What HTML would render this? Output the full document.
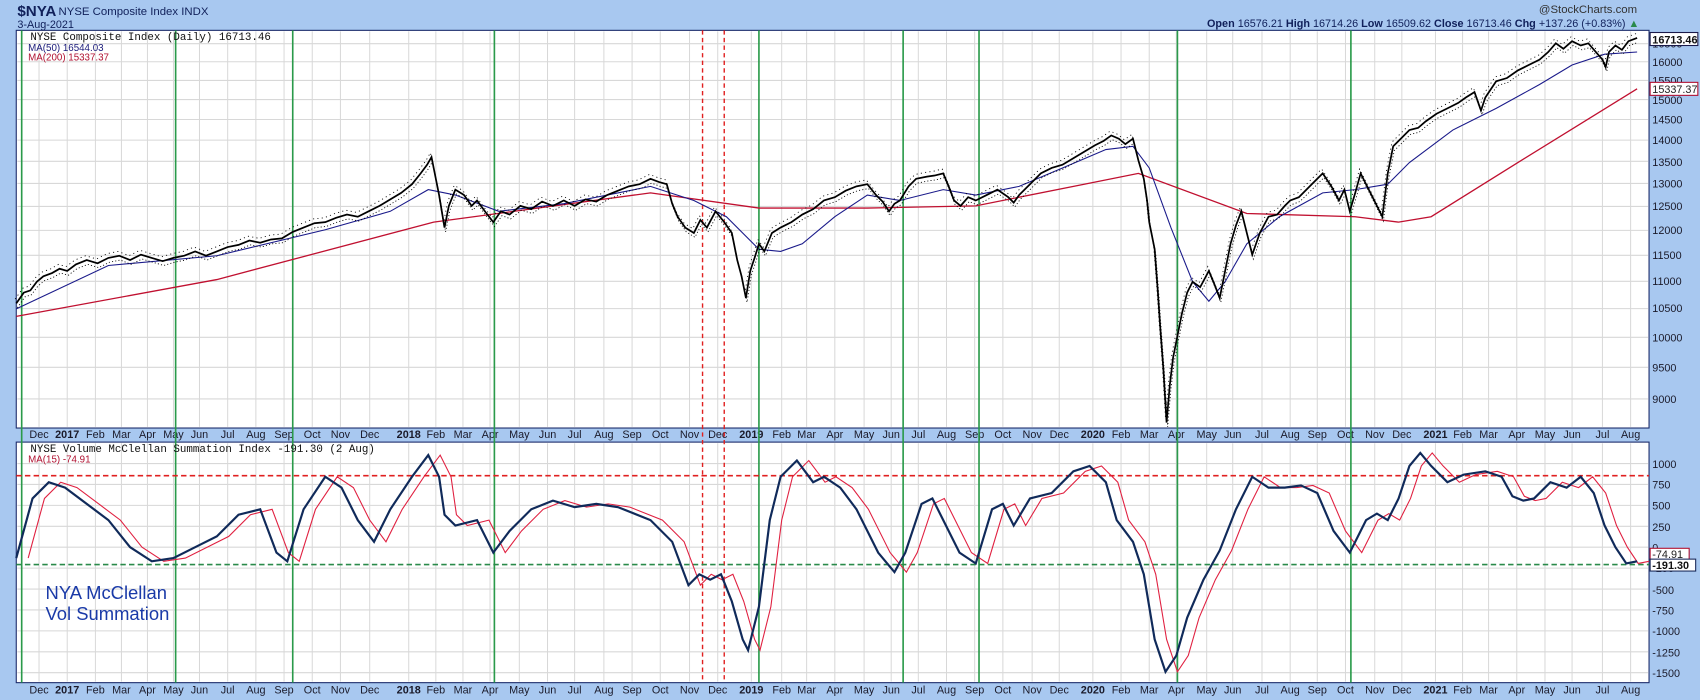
<!DOCTYPE html>
<html><head><meta charset="utf-8"><style>
html,body{margin:0;padding:0;background:#a8c8f0;}
svg{display:block;font-family:"Liberation Sans",sans-serif;}
</style></head><body>
<svg width="1700" height="700" viewBox="0 0 1568 646" preserveAspectRatio="none" xmlns="http://www.w3.org/2000/svg" xmlns:xlink="http://www.w3.org/1999/xlink">
<defs>
<path id="vg" d="M36 0V1M62 0V1M88 0V1M112 0V1M136 0V1M160 0V1M184 0V1M210 0V1M236 0V1M262 0V1M288 0V1M314 0V1M341 0V1M377 0V1M402 0V1M427 0V1M452 0V1M479 0V1M505 0V1M530 0V1M557 0V1M583 0V1M609 0V1M636 0V1M662 0V1M693 0V1M721 0V1M744 0V1M770 0V1M797 0V1M822 0V1M847 0V1M873 0V1M899 0V1M925 0V1M952 0V1M977 0V1M1008 0V1M1034 0V1M1060 0V1M1085 0V1M1113 0V1M1137 0V1M1164 0V1M1190 0V1M1215 0V1M1241 0V1M1268 0V1M1293 0V1M1324 0V1M1349 0V1M1373 0V1M1399 0V1M1425 0V1M1450 0V1M1478 0V1M1504 0V1" stroke="#d8d8d8" stroke-width="1" vector-effect="non-scaling-stroke"/>
<g id="ml" font-size="10" fill="#1a1a2a" text-anchor="middle">
<text x="36">Dec</text><text x="62" font-weight="bold">2017</text><text x="88">Feb</text><text x="112">Mar</text><text x="136">Apr</text><text x="160">May</text><text x="184">Jun</text><text x="210">Jul</text><text x="236">Aug</text><text x="262">Sep</text><text x="288">Oct</text><text x="314">Nov</text><text x="341">Dec</text><text x="377" font-weight="bold">2018</text><text x="402">Feb</text><text x="427">Mar</text><text x="452">Apr</text><text x="479">May</text><text x="505">Jun</text><text x="530">Jul</text><text x="557">Aug</text><text x="583">Sep</text><text x="609">Oct</text><text x="636">Nov</text><text x="662">Dec</text><text x="693" font-weight="bold">2019</text><text x="721">Feb</text><text x="744">Mar</text><text x="770">Apr</text><text x="797">May</text><text x="822">Jun</text><text x="847">Jul</text><text x="873">Aug</text><text x="899">Sep</text><text x="925">Oct</text><text x="952">Nov</text><text x="977">Dec</text><text x="1008" font-weight="bold">2020</text><text x="1034">Feb</text><text x="1060">Mar</text><text x="1085">Apr</text><text x="1113">May</text><text x="1137">Jun</text><text x="1164">Jul</text><text x="1190">Aug</text><text x="1215">Sep</text><text x="1241">Oct</text><text x="1268">Nov</text><text x="1293">Dec</text><text x="1324" font-weight="bold">2021</text><text x="1349">Feb</text><text x="1373">Mar</text><text x="1399">Apr</text><text x="1425">May</text><text x="1450">Jun</text><text x="1478">Jul</text><text x="1504">Aug</text>
</g>
<polyline id="osc" fill="none" points="15,515 30,460 45,445 60,450 80,465 100,480 120,505 140,518 160,515 180,505 200,495 220,475 240,470 255,510 265,518 280,470 300,440 315,450 330,480 345,500 360,470 380,440 395,420 405,440 410,475 420,485 440,480 455,510 470,490 490,470 510,462 530,468 550,465 570,468 600,480 620,500 635,540 645,530 655,535 665,530 675,555 685,590 690,600 700,560 710,480 720,440 735,425 750,445 760,440 775,450 790,470 810,510 825,528 835,510 850,465 860,460 870,480 885,510 900,520 915,470 925,465 935,485 950,460 970,455 990,435 1005,430 1020,445 1030,480 1045,500 1055,530 1065,590 1075,620 1085,605 1095,570 1110,535 1125,508 1140,470 1155,440 1170,450 1185,450 1200,448 1215,455 1230,490 1245,510 1260,480 1270,474 1280,480 1290,460 1300,430 1310,418 1320,430 1335,445 1350,438 1370,435 1385,440 1395,458 1405,462 1415,460 1430,445 1445,450 1458,440 1470,455 1480,485 1490,505 1500,520 1510,518"/>
<polyline id="px" fill="none" points="15,280 22,270 28,268 34,260 40,255 48,252 55,248 62,250 70,244 80,240 90,243 100,238 110,236 120,240 130,235 140,238 150,241 160,238 170,236 180,232 190,236 200,232 210,228 220,226 230,222 240,224 250,221 260,220 270,214 280,210 290,206 300,205 310,201 320,198 330,200 340,195 350,190 360,184 370,178 380,170 388,160 394,152 398,145 401,160 405,180 408,198 410,210 414,190 420,175 428,180 435,190 440,185 448,196 455,205 462,195 470,198 480,190 490,193 500,186 510,190 520,185 530,190 540,184 550,186 560,180 570,176 580,172 590,170 600,165 608,168 615,170 620,188 625,200 632,210 640,215 646,203 652,210 660,195 668,205 675,215 680,240 684,255 688,275 692,250 696,238 700,225 705,232 712,215 720,210 730,205 740,198 750,193 760,185 770,182 780,176 790,172 800,170 808,180 814,186 820,195 825,188 830,185 838,172 845,165 855,163 862,162 870,160 875,172 880,185 886,190 893,182 900,185 910,180 920,175 930,182 935,187 940,180 950,170 960,160 970,155 980,152 990,146 1000,140 1010,134 1018,130 1025,125 1032,128 1038,133 1045,128 1050,148 1055,165 1058,185 1060,205 1062,215 1065,230 1068,270 1070,300 1073,340 1076,390 1079,355 1082,330 1086,310 1090,290 1095,270 1100,260 1107,265 1115,250 1120,262 1125,275 1130,250 1135,225 1140,208 1145,195 1150,215 1155,235 1162,215 1170,200 1178,198 1185,190 1190,185 1198,182 1205,175 1212,168 1220,160 1228,172 1235,185 1240,175 1245,195 1250,178 1255,160 1260,170 1265,180 1270,190 1275,200 1280,160 1285,135 1292,128 1300,120 1308,118 1315,112 1325,105 1335,100 1345,95 1352,90 1360,85 1366,102 1370,90 1380,75 1390,72 1400,65 1410,60 1420,55 1428,48 1435,40 1442,45 1450,38 1458,42 1465,40 1472,48 1478,55 1481,62 1484,48 1490,42 1496,46 1502,38 1510,35"/>
</defs>
<rect x="0" y="0" width="1568" height="646" fill="#a8c8f0"/>
<rect x="15" y="28" width="1506" height="367" fill="#fff" stroke="#1a2a6a" stroke-width="1"/>
<rect x="15" y="408" width="1506" height="222" fill="#fff" stroke="#1a2a6a" stroke-width="1"/>
<use xlink:href="#vg" href="#vg" transform="translate(0,29) scale(1,365)"/>
<use xlink:href="#vg" href="#vg" transform="translate(0,409) scale(1,220)"/>
<g stroke="#d8d8d8" stroke-width="1">
<path d="M16 40.3H1520M16 57H1520M16 74.2H1520M16 91.9H1520M16 110.3H1520M16 129.3H1520M16 148.9H1520M16 169.3H1520M16 190.5H1520M16 212.6H1520M16 235.6H1520M16 259.6H1520M16 284.8H1520M16 311.3H1520M16 339H1520M16 368.2H1520"/>
<path d="M16 427.8H1520M16 447.1H1520M16 466.4H1520M16 485.7H1520M16 505H1520M16 524.3H1520M16 543.6H1520M16 562.9H1520M16 582.2H1520M16 601.5H1520M16 620.8H1520"/>
</g>
<use xlink:href="#ml" href="#ml" transform="translate(0,404)"/>
<use xlink:href="#ml" href="#ml" transform="translate(0,640)"/>
<g font-size="10" fill="#1a1a2a">
<text x="1524" y="44">16500</text><text x="1524" y="61">16000</text><text x="1524" y="78">15500</text><text x="1524" y="96">15000</text><text x="1524" y="114">14500</text><text x="1524" y="133">14000</text><text x="1524" y="153">13500</text><text x="1524" y="173">13000</text><text x="1524" y="194">12500</text><text x="1524" y="216">12000</text><text x="1524" y="239">11500</text><text x="1524" y="263">11000</text><text x="1524" y="288">10500</text><text x="1524" y="315">10000</text><text x="1524" y="343">9500</text><text x="1524" y="372">9000</text>
<text x="1524" y="432">1000</text><text x="1524" y="451">750</text><text x="1524" y="470">500</text><text x="1524" y="490">250</text><text x="1524" y="509">0</text><text x="1524" y="528">-250</text><text x="1524" y="548">-500</text><text x="1524" y="567">-750</text><text x="1524" y="586">-1000</text><text x="1524" y="606">-1250</text><text x="1524" y="625">-1500</text>
</g>
<g stroke="#2a9a4a" stroke-width="1.5">
<path d="M20 28V630M162 28V630M270 28V630M456 28V630M700 28V630M833 28V630M903 28V630M1086 28V630M1246 28V630"/>
</g>
<path d="M648 28V630M668 28V630" stroke="#e02020" stroke-width="1.3" stroke-dasharray="4,3"/>
<path d="M15 439H1521" stroke="#e02020" stroke-width="1.5" stroke-dasharray="5,3"/>
<path d="M15 521H1521" stroke="#2a8a4a" stroke-width="1.5" stroke-dasharray="5,3"/>
<polyline fill="none" stroke="#c01030" stroke-width="1.2" points="15,292 200,258 400,205 600,178 700,192 800,192 900,190 1000,170 1050,160 1150,197 1250,200 1290,205 1320,200 1400,150 1510,82"/>
<polyline fill="none" stroke="#1a1a8a" stroke-width="1" points="15,285 100,245 200,236 300,212 360,195 395,175 420,180 460,195 520,188 600,172 640,185 670,200 700,230 720,232 740,225 770,200 800,180 830,185 870,175 900,180 940,172 980,155 1020,138 1045,135 1060,155 1080,210 1100,260 1115,278 1130,260 1150,225 1180,200 1220,178 1250,175 1280,170 1300,150 1340,120 1380,100 1420,78 1450,60 1480,50 1510,48"/>
<use xlink:href="#px" href="#px" stroke="#000" stroke-width="1.6"/>
<use xlink:href="#px" href="#px" stroke="#000" stroke-width="0.8" transform="translate(1,4)" stroke-dasharray="1,2"/>
<use xlink:href="#px" href="#px" stroke="#000" stroke-width="0.8" transform="translate(-1,-4)" stroke-dasharray="1,3"/>
<use xlink:href="#osc" href="#osc" stroke="#e02040" stroke-width="1" transform="translate(11,0)"/>
<use xlink:href="#osc" href="#osc" stroke="#102a5a" stroke-width="2"/>
<text x="16" y="15" font-size="14" font-weight="bold" fill="#10205a">$NYA</text>
<text x="54" y="14" font-size="10.5" fill="#10205a">NYSE Composite Index  INDX</text>
<text x="16" y="26" font-size="10" fill="#10205a">3-Aug-2021</text>
<text x="1510" y="12" font-size="10.5" fill="#333" text-anchor="end">@StockCharts.com</text>
<text x="1512" y="25" font-size="10" fill="#10205a" text-anchor="end"><tspan font-weight="bold">Open</tspan> 16576.21  <tspan font-weight="bold">High</tspan> 16714.26  <tspan font-weight="bold">Low</tspan> 16509.62  <tspan font-weight="bold">Close</tspan> 16713.46  <tspan font-weight="bold">Chg</tspan> +137.26 (+0.83%) <tspan fill="#2a8a4a">▲</tspan></text>
<text x="28" y="37" font-size="10" fill="#111" font-family="Liberation Mono,monospace">NYSE Composite Index (Daily) 16713.46</text>
<text x="26" y="47" font-size="9" fill="#1a1a7a">MA(50) 16544.03</text>
<text x="26" y="56" font-size="9" fill="#b01030">MA(200) 15337.37</text>
<text x="28" y="417" font-size="10" fill="#111" font-family="Liberation Mono,monospace">NYSE Volume McClellan Summation Index -191.30 (2 Aug)</text>
<text x="26" y="427" font-size="9" fill="#b01030">MA(15) -74.91</text>
<text x="42" y="553" font-size="17" fill="#1a3aa8">NYA McClellan</text>
<text x="42" y="572" font-size="17" fill="#1a3aa8">Vol Summation</text>
<g font-size="10" font-weight="bold">
<rect x="1522" y="30" width="44" height="12" fill="#fff" stroke="#1a1a4a"/><text x="1524" y="40" fill="#111">16713.46</text>
<rect x="1522" y="76" width="44" height="12" fill="#fff" stroke="#b01030"/><text x="1524" y="86" fill="#222" font-weight="normal">15337.37</text>
<rect x="1522" y="506" width="36" height="11" fill="#fff" stroke="#b01030"/><text x="1524" y="515" fill="#222" font-weight="normal">-74.91</text>
<rect x="1522" y="516" width="42" height="11" fill="#fff" stroke="#1a2a5a"/><text x="1524" y="525" fill="#111">-191.30</text>
</g>
</svg>
</body></html>
